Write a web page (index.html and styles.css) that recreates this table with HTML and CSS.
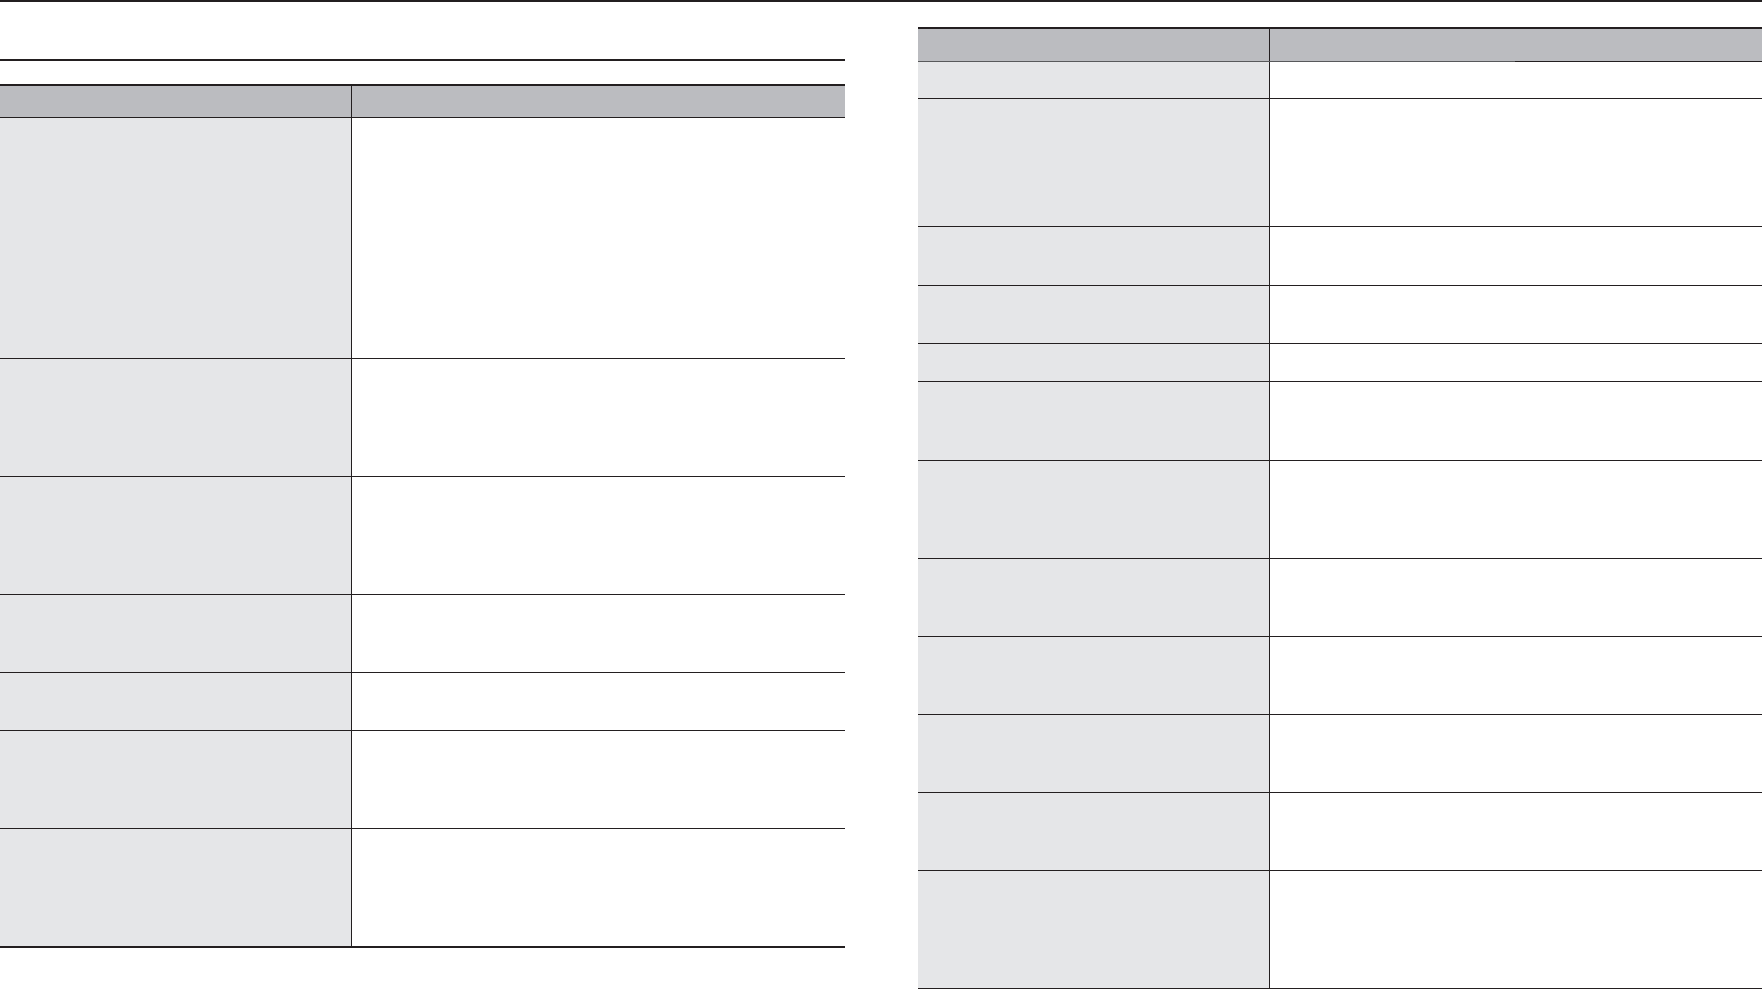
FILE: index.html
```html
<!DOCTYPE html>
<html lang="en">
<head>
<meta charset="utf-8">
<title>Tables</title>
<link rel="stylesheet" href="styles.css">
</head>
<body>
<div class="page">
  <section class="panel panel-left">
    <div class="rule"></div>
    <div class="tbl">
      <div class="row head h33"><div class="cell-a"></div><div class="cell-b"></div></div>
      <div class="row body h241"><div class="cell-a"></div><div class="cell-b"></div></div>
      <div class="row body h118"><div class="cell-a"></div><div class="cell-b"></div></div>
      <div class="row body h118"><div class="cell-a"></div><div class="cell-b"></div></div>
      <div class="row body h78"><div class="cell-a"></div><div class="cell-b"></div></div>
      <div class="row body h58"><div class="cell-a"></div><div class="cell-b"></div></div>
      <div class="row body h98"><div class="cell-a"></div><div class="cell-b"></div></div>
      <div class="row body h118"><div class="cell-a"></div><div class="cell-b"></div></div>
    </div>
  </section>
  <section class="panel panel-right">
    <div class="tbl">
      <div class="row head h34"><div class="cell-a"></div><div class="cell-b"></div></div>
      <div class="head-rule"></div>
      <div class="row first h36"><div class="cell-a"></div><div class="cell-b"></div></div>
      <div class="row body h128"><div class="cell-a"></div><div class="cell-b"></div></div>
      <div class="row body h59"><div class="cell-a"></div><div class="cell-b"></div></div>
      <div class="row body h58"><div class="cell-a"></div><div class="cell-b"></div></div>
      <div class="row body h38"><div class="cell-a"></div><div class="cell-b"></div></div>
      <div class="row body h79"><div class="cell-a"></div><div class="cell-b"></div></div>
      <div class="row body h98"><div class="cell-a"></div><div class="cell-b"></div></div>
      <div class="row body h78"><div class="cell-a"></div><div class="cell-b"></div></div>
      <div class="row body h78"><div class="cell-a"></div><div class="cell-b"></div></div>
      <div class="row body h78"><div class="cell-a"></div><div class="cell-b"></div></div>
      <div class="row body h78"><div class="cell-a"></div><div class="cell-b"></div></div>
      <div class="row body h118"><div class="cell-a"></div><div class="cell-b"></div></div>
    </div>
  </section>
</div>
</body>
</html>
```
FILE: styles.css
```css
html, body {
  margin: 0;
  padding: 0;
  background: #ffffff;
  font-family: "Liberation Sans", Arial, sans-serif;
}

.page {
  width: 1762px;
  height: 989px;
  border-top: 2px solid #231f20;
  box-sizing: border-box;
  display: flex;
  align-items: flex-start;
  overflow: hidden;
}

.panel-left {
  width: 845px;
  padding-top: 57px;
}

.rule {
  height: 0;
  border-top: 2px solid #231f20;
  margin-bottom: 23px;
}

.panel-right {
  width: 844px;
  margin-left: 73px;
  padding-top: 25px;
}

.tbl {
  border-top: 2px solid #231f20;
  border-bottom: 2px solid #231f20;
}

.row {
  display: grid;
  grid-template-columns: 352px 1fr;
  box-sizing: border-box;
}

.row.body {
  border-top: 1px solid #231f20;
}

.row.head {
  background: #bbbcc0;
}

.row .cell-a {
  border-right: 1px solid #231f20;
}

.row.body .cell-a,
.row.first .cell-a {
  background: #e5e6e8;
}

.head-rule {
  height: 1px;
  background: linear-gradient(to right, #58595b 0, #58595b 597px, #231f20 597px, #231f20 100%);
}

.h33 { height: 31px; }
.h34 { height: 32px; }
.h36 { height: 36px; }
.h38 { height: 38px; }
.h58 { height: 58px; }
.h59 { height: 59px; }
.h78 { height: 78px; }
.h79 { height: 79px; }
.h98 { height: 98px; }
.h118 { height: 118px; }
.h128 { height: 128px; }
.h241 { height: 241px; }
```
